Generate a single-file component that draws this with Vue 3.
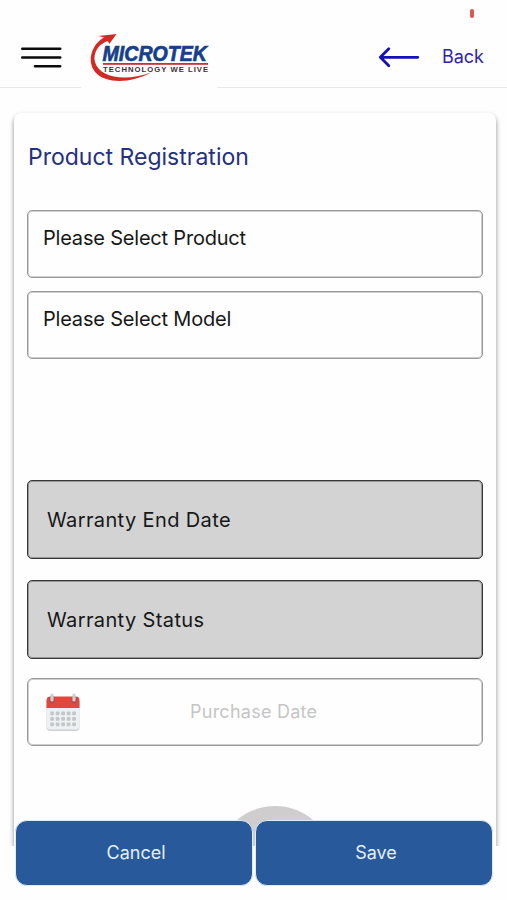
<script setup>
import { ref } from 'vue'

const selects = ref(['Please Select Product', 'Please Select Model'])
const readonlyFields = ref(['Warranty End Date', 'Warranty Status'])
const dotRows = [0, 1, 2]
const dotCols = [0, 1, 2, 3, 4]
</script>

<template>
  <div class="screen">
    <header class="header">
      <span class="indicator"></span>
      <svg class="menu" width="42" height="24" viewBox="0 0 42 24">
        <path d="M2.300 3.700H40.200M2.300 12.500H40.200M15 21.200H40.200" stroke="#0b0b0b" stroke-width="2.6" stroke-linecap="round" />
      </svg>
      <div class="brand">
        <svg width="136" height="64" viewBox="81 26 136 64">
          <path d="M104 37.5L98.500 36L116.500 34L109.500 43.800L107.500 41C97 45 93 54 95 62C99 77 124 82.500 151 72.500C131 83.500 106 84 95.500 72.500C86 61 92 44 104 37.500Z" fill="#d22b25" />
          <text class="logo-name" x="102.500" y="61" textLength="104.500" lengthAdjust="spacingAndGlyphs">MICROTEK</text>
          <rect x="103" y="63" width="105" height="1.800" fill="#d22b35" />
          <text class="logo-tag" transform="translate(103 71.800) scale(1.130 1)" textLength="93" lengthAdjust="spacing">TECHNOLOGY WE LIVE</text>
        </svg>
      </div>
      <a class="back">
        <svg width="42" height="22" viewBox="0 0 42 22">
          <path d="M39.800 11.300H2.500M10.800 2.800L2.300 11.300L10.800 19.800" fill="none" stroke="#1510b8" stroke-width="2.800" stroke-linecap="round" stroke-linejoin="round" />
        </svg>
        <span>Back</span>
      </a>
    </header>

    <main class="content">
      <section class="card">
        <h1>Product Registration</h1>
        <div v-for="label in selects" :key="label" class="field select"><span>{{ label }}</span></div>
        <div class="spacer"></div>
        <div v-for="label in readonlyFields" :key="label" class="field readonly"><span>{{ label }}</span></div>
        <div class="field date">
          <svg width="36" height="40" viewBox="0 0 36 40">
            <rect x="1.500" y="7" width="33" height="32" rx="4" fill="#ccd0d0" />
            <path d="M1.500 14H34.500V33.500Q34.500 37.500 30.500 37.500H5.500Q1.500 37.500 1.500 33.500Z" fill="#eef1f1" />
            <path d="M1.500 16V8.500Q1.500 4.500 5.500 4.500H30.500Q34.500 4.500 34.500 8.500V16Z" fill="#e2473e" />
            <path d="M7 6.500V9M29 6.500V9" stroke="#b5474a" stroke-width="5" stroke-linecap="round" />
            <path d="M7 3V8M29 3V8" stroke="#ccd0d4" stroke-width="3.200" stroke-linecap="round" />
            <template v-for="r in dotRows" :key="r">
              <rect v-for="c in dotCols" :key="c" :x="5.200 + c * 5.500" :y="19.500 + r * 5.500" width="3.800" height="3.800" rx="1" fill="#c3c7cb" />
            </template>
          </svg>
          <span>Purchase Date</span>
        </div>
        <div class="photo"></div>
      </section>
    </main>

    <footer class="actions">
      <button type="button" class="cancel">Cancel</button>
      <button type="button" class="save">Save</button>
    </footer>
  </div>
</template>

<style>
body {
  background: #fefefe;
}
</style>

<style scoped>
.screen {
  width: 507px;
  height: 900px;
  overflow: hidden;
  background: #fefefe;
  font-family: Inter, "Liberation Sans", sans-serif;
}

.header {
  position: relative;
  box-sizing: border-box;
  height: 88px;
  padding: 26px 23px 0 20px;
  border-bottom: 1px solid #e9e9e9;
  display: flex;
  align-items: flex-start;
}

.indicator {
  position: absolute;
  left: 470px;
  top: 9px;
  width: 4px;
  height: 9px;
  border-radius: 2px;
  background: #dc5850;
}

.menu {
  margin-top: 19px;
}

.brand {
  width: 136px;
  height: 64px;
  margin-left: 19px;
  background: #fefefe;
  position: relative;
}

.brand svg {
  display: block;
}

.logo-name {
  font: italic bold 21.500px "Liberation Sans", sans-serif;
  fill: #173f8c;
  stroke: #173f8c;
  stroke-width: 0.7px;
}

.logo-tag {
  font: bold 6.800px "Liberation Sans", sans-serif;
  fill: #38343c;
}

.back {
  margin-left: auto;
  margin-top: 20px;
  display: flex;
  align-items: center;
  gap: 22px;
  color: #3021ad;
  font-size: 18px;
  line-height: 22px;
}

.content {
  box-sizing: border-box;
  height: 758px;
  padding: 25px 11px 0 14px;
  overflow: hidden;
}

.card {
  box-sizing: border-box;
  height: 900px;
  padding: 31px 13px 0;
  border-radius: 7px;
  background: #fefefe;
  box-shadow: 0 3px 5px rgba(0, 0, 0, 0.45);
}

h1 {
  margin: 0 0 40px 1px;
  font-size: 23px;
  line-height: 26px;
  font-weight: 400;
  color: #25307f;
}

.field {
  box-sizing: border-box;
  border: 1px solid #999;
  border-radius: 5px;
  box-shadow: inset 0 0 0 1px rgba(120, 120, 120, 0.35);
  color: #171717;
  font-size: 20px;
  line-height: 24px;
}

.select {
  height: 68px;
  margin-bottom: 13px;
  padding: 15px;
  letter-spacing: -0.2px;
}

.spacer {
  height: 108px;
}

.readonly {
  height: 79px;
  margin-bottom: 21px;
  padding: 27px 19px;
  border-color: #383838;
  box-shadow: inset 0 0 0 1px rgba(40, 40, 40, 0.35);
  background: #d3d3d3;
  letter-spacing: 0.38px;
}

.date {
  height: 68px;
  margin-top: -2px;
  padding: 0 17px;
  display: flex;
  align-items: center;
  border-radius: 6px;
  color: #c5c5c5;
  font-size: 18px;
  letter-spacing: 0.25px;
}

.date span {
  margin-left: 109px;
}

.photo {
  width: 118px;
  height: 118px;
  margin: 60px 0 0 189px;
  border-radius: 50%;
  background: #cfcdcd;
}

.actions {
  position: relative;
  margin-top: -26px;
  padding: 0 14px 0 15px;
  display: grid;
  grid-template-columns: 1fr 1fr;
  gap: 2px;
}

.actions button {
  height: 66px;
  padding: 0 0 2px 4px;
  border: 1px solid #dfeafa;
  border-radius: 12px;
  background: #285a9b;
  color: #e4effd;
  font: 18px Inter, "Liberation Sans", sans-serif;
}
</style>
